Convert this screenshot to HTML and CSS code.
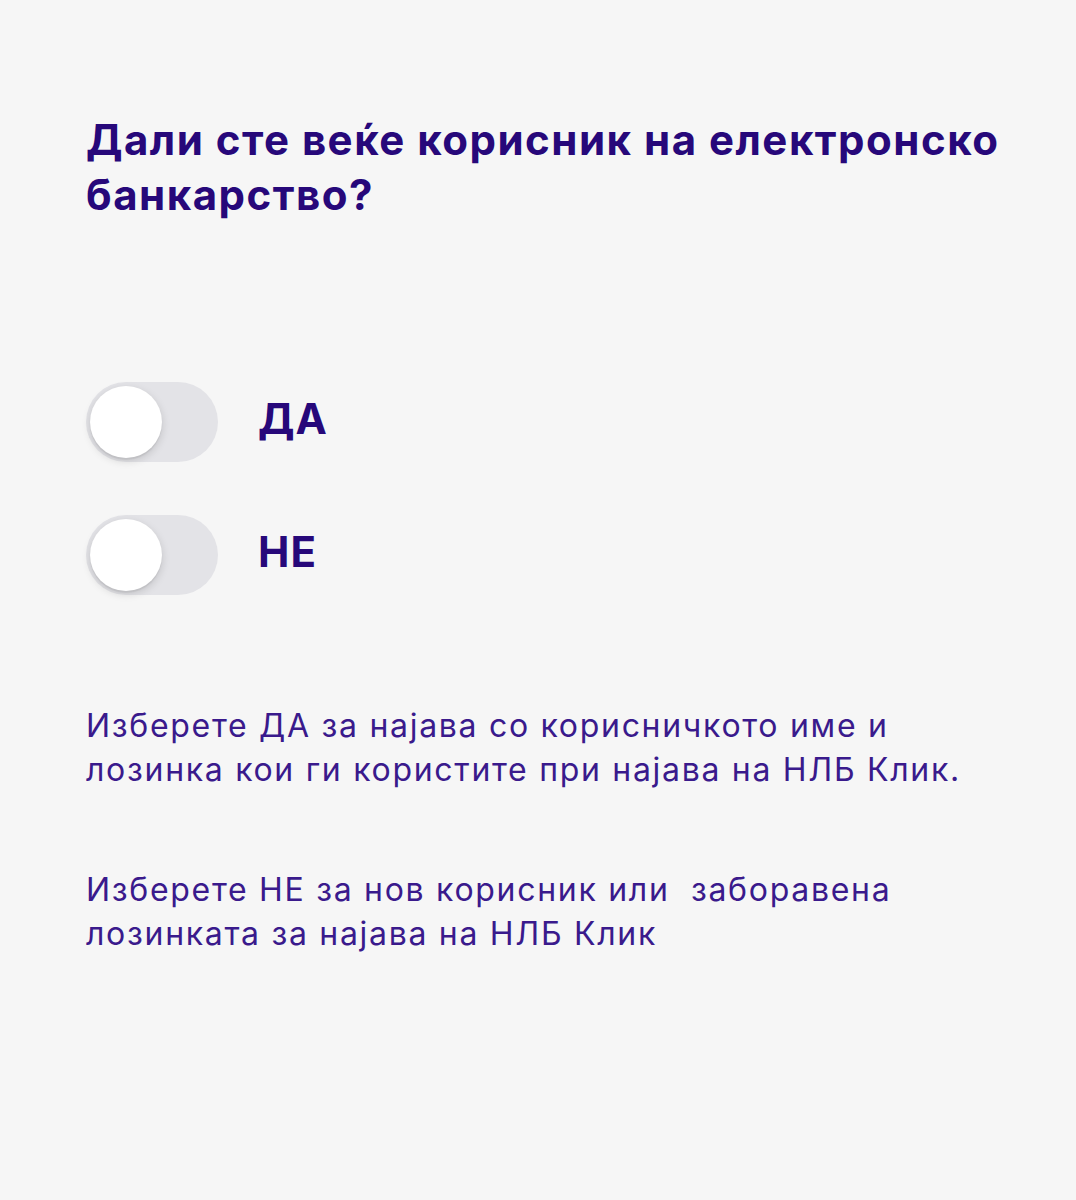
FILE: index.html
```html
<!DOCTYPE html>
<html lang="mk">
<head>
    <meta charset="UTF-8">
    <meta name="viewport" content="width=device-width, initial-scale=1.0">
    <title>НЛБ Клик - Најава</title>
    <link rel="stylesheet" href="styles.css">
</head>
<body>
    <div class="screen">
        <h1 class="question">Дали сте веќе корисник на електронско банкарство?</h1>

        <div class="options">
            <label class="option">
                <input type="checkbox" class="switch-input" id="optYes">
                <span class="switch"><span class="knob"></span></span>
                <span class="option-label">ДА</span>
            </label>
            <label class="option">
                <input type="checkbox" class="switch-input" id="optNo">
                <span class="switch"><span class="knob"></span></span>
                <span class="option-label">НЕ</span>
            </label>
        </div>

        <p class="hint">Изберете ДА за најава со корисничкото име и лозинка кои ги користите при најава на НЛБ Клик.</p>
        <p class="hint">Изберете НЕ за нов корисник или &nbsp;заборавена лозинката за најава на НЛБ Клик</p>
    </div>
</body>
</html>
```

FILE: styles.css
```css
body {
    margin: 0;
    padding: 0;
    background: #f6f6f6;
    font-family: 'Inter', 'Roboto', sans-serif;
}

.screen {
    padding: 112px 40px 0 86px;
}

.question {
    margin: 0;
    width: 950px;
    font-size: 42px;
    line-height: 55px;
    font-weight: 700;
    letter-spacing: 1.5px;
    color: #27087a;
}

.options {
    margin-top: 160px;
    display: flex;
    flex-direction: column;
    gap: 53px;
}

.option {
    display: flex;
    align-items: center;
    gap: 40px;
    cursor: pointer;
}

.switch-input {
    display: none;
}

.switch {
    width: 132px;
    height: 80px;
    border-radius: 40px;
    background: #e3e3e7;
    padding: 4px;
    box-sizing: border-box;
    display: flex;
    align-items: center;
}

.knob {
    width: 72px;
    height: 72px;
    border-radius: 50%;
    background: #fff;
    box-shadow: 0 3px 8px rgba(0, 0, 0, 0.15), 0 2px 1px rgba(0, 0, 0, 0.06);
}

.switch-input:checked + .switch {
    background: #34c759;
    justify-content: flex-end;
}

.option-label {
    padding-bottom: 8px;
    font-size: 42px;
    font-weight: 700;
    letter-spacing: 1px;
    color: #27087a;
}

.hint {
    margin: 0;
    width: 890px;
    font-size: 32px;
    line-height: 44px;
    letter-spacing: 1.7px;
    color: #3a1a8c;
}

.options + .hint {
    margin-top: 109px;
}

.hint + .hint {
    margin-top: 76px;
}
```
